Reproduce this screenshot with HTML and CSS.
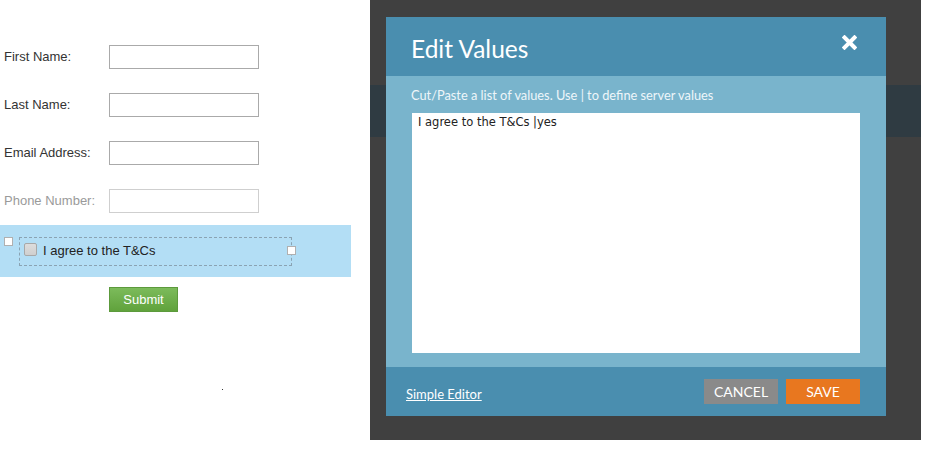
FILE: index.html
```html
<!DOCTYPE html>
<html>
<head>
<meta charset="utf-8">
<link rel="stylesheet" href="styles.css">
</head>
<body>
<div class="page">
  <div class="form">
    <div class="row"><span class="label">First Name:</span><span class="input"></span></div>
    <div class="row"><span class="label">Last Name:</span><span class="input"></span></div>
    <div class="row"><span class="label">Email Address:</span><span class="input"></span></div>
    <div class="row dim"><span class="label">Phone Number:</span><span class="input"></span></div>
    <div class="band">
      <span class="handle handle-left"></span>
      <div class="selected">
        <span class="cb"></span><span class="cb-text">I agree to the T&amp;Cs</span>
        <span class="handle handle-right"></span>
      </div>
    </div>
    <div class="submit-row"><span class="submit">Submit</span></div>
    <div class="dot-row"><span class="dot"></span></div>
  </div>
  <div class="overlay">
    <div class="backband"></div>
    <div class="modal">
      <div class="modal-head">
        <span class="title">Edit Values</span>
        <svg class="close" width="15" height="15" viewBox="0 0 15 15"><path d="M2.5 2.5 L12.5 12.5 M12.5 2.5 L2.5 12.5" stroke="#fff" stroke-width="4" stroke-linecap="square"/></svg>
      </div>
      <div class="modal-body">
        <div class="hint">Cut/Paste a list of values. Use | to define server values</div>
        <div class="textarea">I agree to the T&amp;Cs |yes</div>
      </div>
      <div class="modal-foot">
        <span class="link">Simple Editor</span>
        <div class="buttons">
          <span class="btn cancel">CANCEL</span>
          <span class="btn save">SAVE</span>
        </div>
      </div>
    </div>
  </div>
</div>
</body>
</html>
```
FILE: styles.css
```css
html, body { margin: 0; padding: 0; background: #fff; }
.page { display: flex; width: 946px; height: 456px; overflow: hidden; }
.form {
  width: 370px; flex: none; padding-top: 45px; box-sizing: border-box;
  font-family: "Liberation Sans", Arial, sans-serif; font-size: 13px; color: #333;
}
.row { display: flex; align-items: center; height: 24px; margin-bottom: 24px; padding-left: 4px; }
.row .label { width: 105px; margin-top: -2px; }
.row .input { width: 150px; height: 24px; box-sizing: border-box; border: 1px solid #aaa; background: #fff; }
.row.dim { margin-bottom: 12px; }
.row.dim .label { color: #9a9a9a; }
.row.dim .input { border-color: #cfcfcf; }
.band {
  position: relative; width: 351px; height: 52px; background: #b3def5;
  padding: 12px 0 0 19px; box-sizing: border-box;
}
.selected {
  position: relative; width: 273px; height: 29px; box-sizing: border-box;
  border: 1px dashed #8aa3b3; display: flex; align-items: center; padding-left: 4px;
}
.cb {
  width: 11px; height: 11px; border: 1px solid #a8a8a8; border-radius: 2px;
  background: linear-gradient(#ddd, #cfcfcf); margin-right: 6px; margin-top: -4px;
}
.cb-text { color: #222; margin-top: -2px; }
.handle { position: absolute; width: 7px; height: 7px; background: #fff; border: 1px solid #b0b0b0; }
.handle-left { left: 4px; top: 12px; }
.handle-right { right: -5px; top: 8px; }
.submit-row { padding: 10px 0 0 109px; }
.submit {
  display: inline-block; width: 69px; height: 25px; box-sizing: border-box;
  background: linear-gradient(#7cbb5b, #60a23c); border: 1px solid #5c9a3c;
  color: #fff; text-align: center; line-height: 23px; font-size: 13px;
}
.dot-row { padding: 77px 0 0 222px; }
.dot { display: block; width: 1px; height: 1px; background: #333; }

.overlay {
  position: relative; width: 551px; height: 440px; flex: none; background: #404040;
  padding: 17px 0 0 16px; box-sizing: border-box;
}
.backband { position: absolute; left: 0; right: 0; top: 85px; height: 52px; background: #2f3b42; }
.modal {
  position: relative; width: 500px; height: 399px; display: flex; flex-direction: column;
  font-family: Lato, "Open Sans", sans-serif; color: #fff;
}
.modal-head {
  height: 59px; background: #4a8eaf; display: flex; align-items: center;
  justify-content: space-between; padding: 0 29px 0 25px; flex: none;
}
.title { font-size: 24.5px; margin-top: 3px; }
.close { margin-top: -8px; }
.modal-body { flex: 1; background: #79b4cc; padding: 10px 26px 14px 26px; display: flex; flex-direction: column; }
.hint { font-size: 12.8px; color: #eef6fa; margin-left: -1px; height: 27px; line-height: 18px; }
.textarea {
  height: 240px; background: #fff; color: #222; box-sizing: border-box;
  font-family: "DejaVu Sans", Verdana, sans-serif; font-size: 11.5px; padding: 2px 6px;
}
.modal-foot {
  height: 49px; flex: none; background: #4a8eaf; display: flex; align-items: center;
  justify-content: space-between; padding: 0 26px 0 20px;
}
.link { font-size: 13px; text-decoration: underline; margin-top: 4px; }
.buttons { display: flex; gap: 8px; }
.btn { width: 74px; height: 25px; text-align: center; line-height: 25px; font-size: 14px; }
.cancel { background: #8a8a8a; }
.save { background: #e8771f; }
```
